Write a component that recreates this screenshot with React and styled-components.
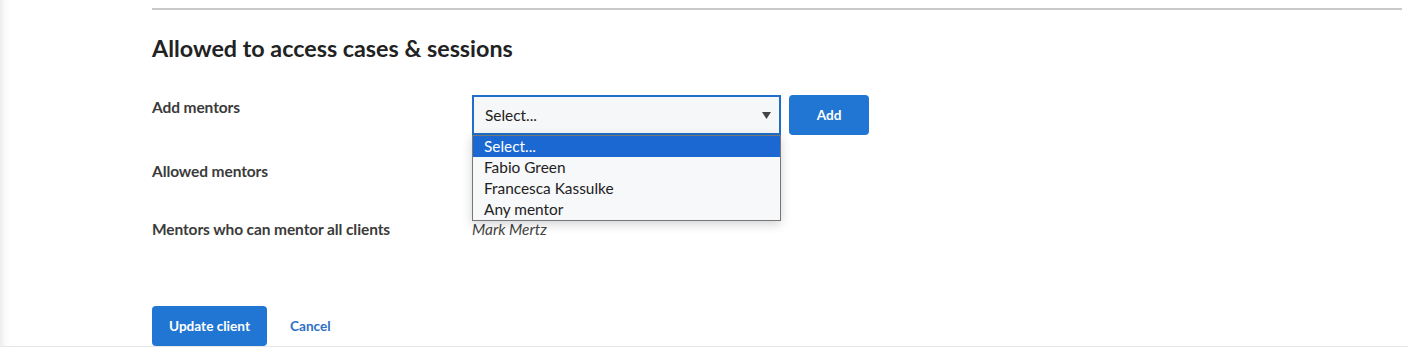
import React from 'react';
import styled, { createGlobalStyle } from 'styled-components';

const GlobalStyle = createGlobalStyle`
  html, body { margin: 0; padding: 0; background: #fff; }
  body { font-family: Lato, "Open Sans", sans-serif; -webkit-font-smoothing: antialiased; }
`;

const Page = styled.div`
  height: 346px;
  overflow: hidden;
  padding: 0 6px 0 152px;
  background: linear-gradient(to right, #ededed 0, #fafafa 5px, #fff 10px);
  border-bottom: 1px solid #e6e6e6;
`;

const Rule = styled.div`
  margin-top: 8px;
  height: 2px;
  background: #c9c9c9;
`;

const Heading = styled.h2`
  margin: 23px 0 0;
  font-size: 23.3px;
  line-height: 30px;
  font-weight: 700;
  color: #222;
`;

const Form = styled.div`
  margin-top: 32px;
  display: flex;
  flex-direction: column;
`;

const Row = styled.div`
  display: grid;
  grid-template-columns: 320px 1fr;
  align-items: start;
  margin-bottom: ${({ $mb }) => $mb || 0}px;
`;

const Label = styled.div`
  font-size: 15.5px;
  letter-spacing: -0.1px;
  line-height: 24px;
  font-weight: 700;
  color: #3b3b3b;
`;

const Value = styled.div`
  display: flex;
  align-items: flex-start;
  gap: 8px;
  min-height: 24px;
  font-size: 15.4px;
  line-height: 24px;
  color: #444;
  font-style: ${({ $italic }) => ($italic ? 'italic' : 'normal')};
`;

const SelectWrap = styled.div`
  position: relative;
  width: 309px;
`;

const SelectBox = styled.div`
  box-sizing: border-box;
  height: 40px;
  padding: 0 11px;
  border: 2px solid #1f6fca;
  background: #f6f7f8;
  display: flex;
  align-items: center;
  justify-content: space-between;
  font-size: 15.4px;
  color: #222;
`;

const Caret = styled.svg`
  width: 9px;
  height: 7px;
  fill: #444;
  margin-right: -3px;
`;

const ListBox = styled.div`
  position: absolute;
  top: 100%;
  left: 0;
  width: 309px;
  box-sizing: border-box;
  border: 1px solid #777;
  background: #f7f8fa;
  box-shadow: 0 3px 10px rgba(0, 0, 0, 0.18);
  z-index: 2;
`;

const Option = styled.div`
  height: 21px;
  line-height: 21px;
  padding-left: 11px;
  font-size: 15.4px;
  color: ${({ $active }) => ($active ? '#fff' : '#222')};
  background: ${({ $active }) => ($active ? '#1b68d3' : 'transparent')};
`;

const Button = styled.button`
  box-sizing: border-box;
  height: 40px;
  width: ${({ $w }) => $w}px;
  border: none;
  border-radius: 4px;
  background: #2176d3;
  color: #fff;
  font-family: inherit;
  font-size: 13.6px;
  font-weight: 700;
  cursor: pointer;
`;

const Actions = styled.div`
  display: flex;
  align-items: center;
  gap: 23px;
`;

const LinkButton = styled.a`
  color: #2f70c6;
  font-size: 13.6px;
  font-weight: 700;
  cursor: pointer;
`;

const options = ['Select...', 'Fabio Green', 'Francesca Kassulke', 'Any mentor'];

export default function App() {
  return (
    <>
      <GlobalStyle />
      <Page>
        <Rule />
        <Heading>Allowed to access cases &amp; sessions</Heading>
        <Form>
          <Row $mb={24}>
            <Label>Add mentors</Label>
            <Value>
              <SelectWrap>
                <SelectBox>
                  <span>Select...</span>
                  <Caret viewBox="0 0 9 7"><path d="M0 0h9L4.5 7z" /></Caret>
                </SelectBox>
                <ListBox>
                  {options.map((o, i) => (
                    <Option key={o} $active={i === 0}>{o}</Option>
                  ))}
                </ListBox>
              </SelectWrap>
              <Button $w={80}>Add</Button>
            </Value>
          </Row>
          <Row $mb={34}>
            <Label>Allowed mentors</Label>
            <Value />
          </Row>
          <Row $mb={65}>
            <Label>Mentors who can mentor all clients</Label>
            <Value $italic>Mark Mertz</Value>
          </Row>
          <Actions>
            <Button $w={115}>Update client</Button>
            <LinkButton>Cancel</LinkButton>
          </Actions>
        </Form>
      </Page>
    </>
  );
}
